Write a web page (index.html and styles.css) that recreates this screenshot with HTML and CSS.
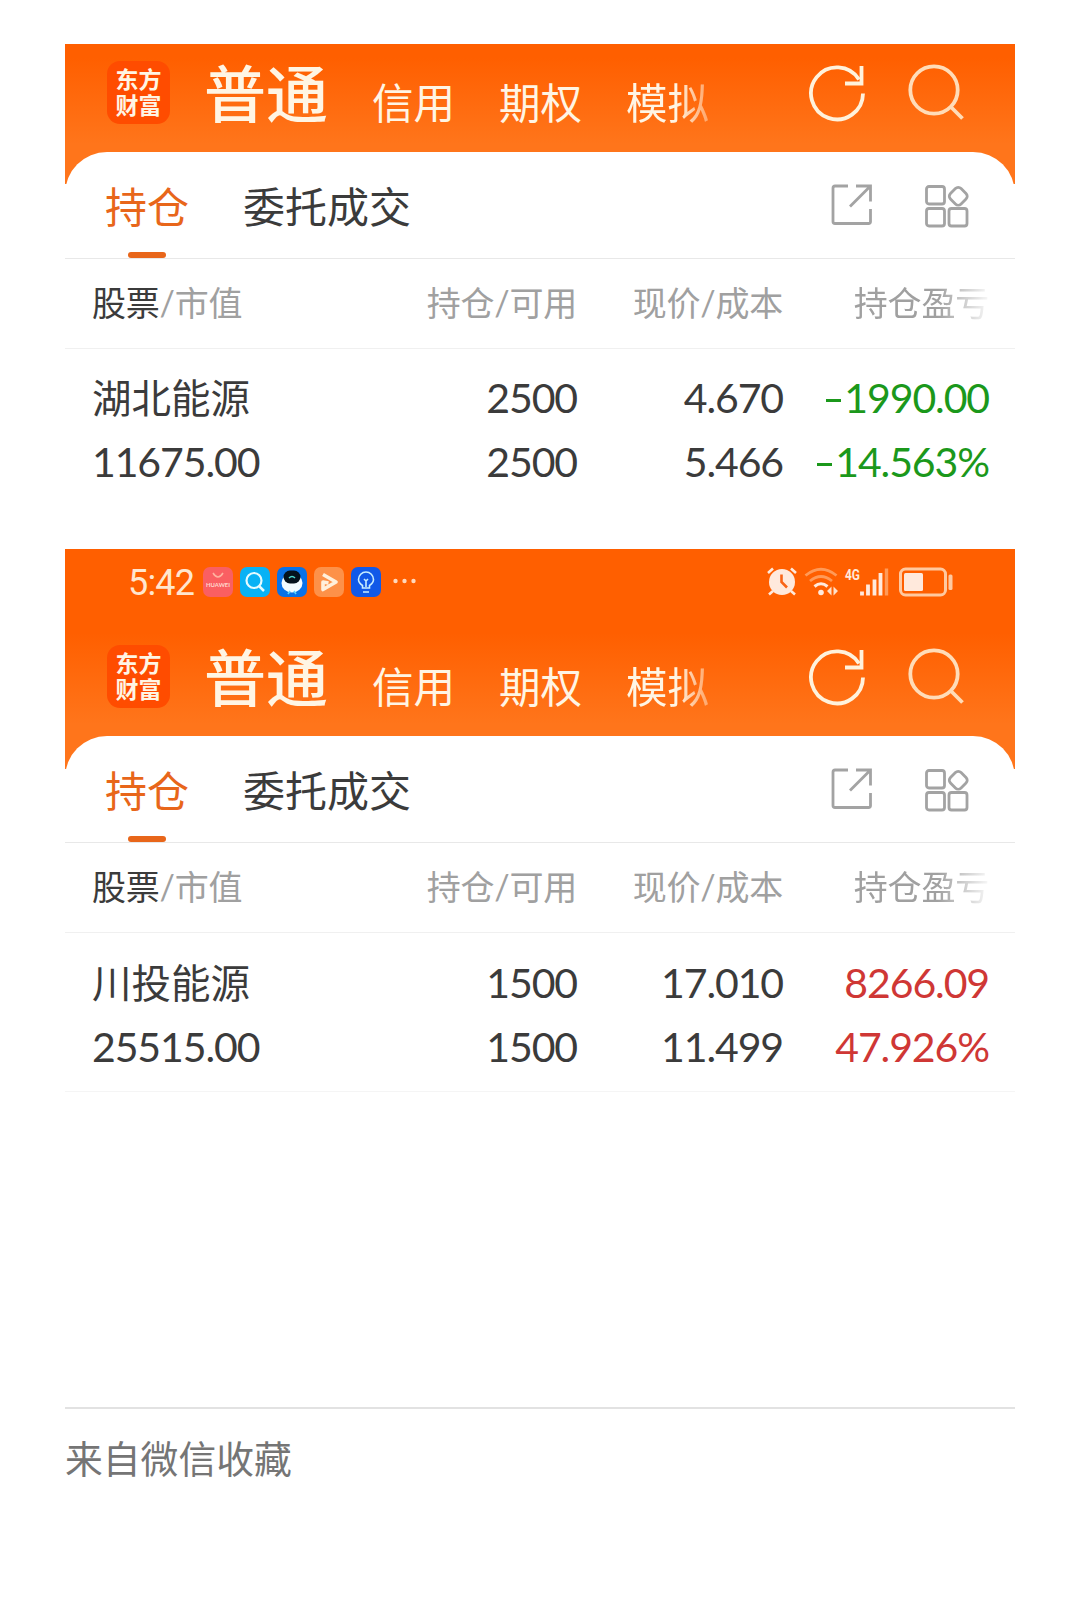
FILE: index.html
```html
<!DOCTYPE html>
<html lang="zh-CN">
<head>
  <meta charset="UTF-8">
  <title>持仓</title>
  <link rel="stylesheet" href="styles.css">
</head>
<body>
  <!-- Shared icons -->
  <svg class="sprite" width="0" height="0">
    <symbol id="refresh" viewBox="0 0 58 58">
      <path d="M55 29.5A26 26 0 1 1 51 15.500" />
      <path d="M53.500 2v17.500H37" />
    </symbol>
    <symbol id="search" viewBox="0 0 58 58">
      <circle cx="26" cy="26" r="23.700" />
      <path d="M43 43l11.500 11.500" />
    </symbol>
    <symbol id="export" viewBox="0 0 42 42">
      <path d="M17 2H4Q2 2 2 4V37.500Q2 39.500 4 39.500H37.500Q39.500 39.500 39.500 37.500V25M25 2H39.500V17.500M39 2.500L19 22.500" />
    </symbol>
    <symbol id="grid" viewBox="0 0 44 43">
      <rect x="1.500" y="1.500" width="18" height="17.500" rx="2.500" />
      <rect x="1.500" y="23.500" width="18" height="17.500" rx="2.500" />
      <rect x="24" y="23.500" width="18" height="17.500" rx="2.500" />
      <rect x="25.750" y="3.750" width="15" height="15" rx="4" transform="rotate(45 33.250 11.250)" />
    </symbol>
  </svg>

  <div class="note">
    <section class="panel">
      <header class="topbar">
        <div class="logo">东方<br>财富</div>
        <nav class="accounts">
          <span class="account active">普通</span>
          <span class="account">信用</span>
          <span class="account">期权</span>
          <span class="account fade">模拟</span>
        </nav>
        <svg class="icon-refresh"><use href="#refresh" /></svg>
        <svg class="icon-search"><use href="#search" /></svg>
      </header>
      <div class="sheet">
        <div class="tabs">
          <span class="tab selected">持仓</span>
          <span class="tab">委托成交</span>
          <svg class="icon-export"><use href="#export" /></svg>
          <svg class="icon-grid"><use href="#grid" /></svg>
        </div>
        <div class="row head">
          <span><b>股票</b>/市值</span>
          <span>持仓/可用</span>
          <span>现价/成本</span>
          <span class="cut">持仓盈亏</span>
        </div>
        <div class="stock">
          <div class="row">
            <span class="name">湖北能源</span>
            <span>2500</span>
            <span>4.670</span>
            <span class="down"><i class="minus"></i>1990.00</span>
          </div>
          <div class="row">
            <span>11675.00</span>
            <span>2500</span>
            <span>5.466</span>
            <span class="down"><i class="minus"></i>14.563%</span>
          </div>
        </div>
      </div>
    </section>

    <section class="panel second">
      <div class="statusbar">
        <span class="time">5:42</span>
        <div class="apps">
          <svg class="app" viewBox="0 0 30 30">
            <rect width="30" height="30" rx="7" fill="#fa5f62" />
            <path d="M10 6q5 8 10 0" fill="none" stroke="#ffb3a0" stroke-width="1.500" />
            <text x="15" y="19.500" class="brand" textLength="24" lengthAdjust="spacingAndGlyphs">HUAWEI</text>
          </svg>
          <svg class="app" viewBox="0 0 30 30">
            <rect width="30" height="30" rx="7" fill="#08b2f5" />
            <circle cx="14" cy="13.500" r="7.500" fill="none" stroke="#e4fbff" stroke-width="2.200" />
            <path d="M19 19l5 5" stroke="#e4fbff" stroke-width="2.500" />
          </svg>
          <svg class="app" viewBox="0 0 30 30">
            <rect width="30" height="30" rx="7" fill="#0872e8" />
            <ellipse cx="15" cy="16" rx="10.500" ry="9.500" fill="#f2fbff" />
            <rect x="6.500" y="3.500" width="17" height="13" rx="6.500" fill="#04121d" />
            <path d="M12 11q3-3 6 0" fill="none" stroke="#4bd9cf" stroke-width="1.500" />
            <path d="M13 24l-2 3M17 24l2 3" stroke="#5dd4ff" stroke-width="1.600" />
          </svg>
          <svg class="app" viewBox="0 0 30 30">
            <rect width="30" height="30" rx="7" fill="#fd9149" />
            <path d="M9 7.500L22 15 9 22.500V15l5.500 1" fill="none" stroke="#fff0dc" stroke-width="3.600" stroke-linejoin="round" />
          </svg>
          <svg class="app" viewBox="0 0 30 30">
            <rect width="30" height="30" rx="7" fill="#1159e8" />
            <path d="M11.500 21v-2.500C8.500 16.500 7.500 14.500 7.500 12.500a7.500 7.500 0 0 1 15 0c0 2-1 4-4 6V21zM12 25h6M15 20v-6l-2-2M15 14l2-2" fill="none" stroke="#c6edff" stroke-width="1.600" />
          </svg>
        </div>
        <svg class="more" viewBox="0 0 24 6">
          <circle cx="2.500" cy="3" r="2.200" /><circle cx="11.500" cy="3" r="2.200" /><circle cx="20.500" cy="3" r="2.200" />
        </svg>
        <svg class="system" viewBox="0 0 186 30">
          <!-- alarm -->
          <circle cx="15" cy="15" r="13" fill="#ffe9dc" />
          <path d="M1 6l5-4.500M29 6l-5-4.500M6 24l-4 3.500M24 24l4 3.500" stroke="#ffe9dc" stroke-width="2.600" />
          <path d="M14.500 7.500V15l5.500 5.500" fill="none" stroke="#f96416" stroke-width="2.600" />
          <!-- wifi -->
          <path d="M38.500 8.500Q54-4 69.500 8.500" fill="none" stroke="#ff9a58" stroke-width="2.800" />
          <path d="M43 14q11-9 22 0" fill="none" stroke="#ff9a58" stroke-width="2.800" />
          <path d="M47.500 19.500q6.500-5.500 13 0" fill="none" stroke="#ffe9dc" stroke-width="3" />
          <circle cx="54" cy="25.500" r="2.800" fill="#ffe9dc" />
          <path d="M64.500 19.500v9l-4.500-4.500zM66.500 19.500v9l4.500-4.500z" fill="#ffe0c8" />
          <!-- mobile signal -->
          <text x="78" y="12.500" class="net" textLength="15" lengthAdjust="spacingAndGlyphs">4G</text>
          <path d="M95 28.500v-4M101 28.500V17.500M107.500 28.500V12.500M113.500 28.500V6" stroke="#ffe9dc" stroke-width="3.800" />
          <path d="M119.500 28.500V1.500" stroke="#ff9a58" stroke-width="3.400" />
          <!-- battery -->
          <rect x="133.500" y="2" width="45" height="26" rx="5" fill="none" stroke="#ffc9a0" stroke-width="3" />
          <rect x="137" y="6" width="19" height="18" rx="1.500" fill="#ffe9dc" />
          <rect x="181.500" y="7.500" width="4" height="15.500" rx="1.500" fill="#ffc9a0" />
        </svg>
      </div>
      <header class="topbar">
        <div class="logo">东方<br>财富</div>
        <nav class="accounts">
          <span class="account active">普通</span>
          <span class="account">信用</span>
          <span class="account">期权</span>
          <span class="account fade">模拟</span>
        </nav>
        <svg class="icon-refresh"><use href="#refresh" /></svg>
        <svg class="icon-search"><use href="#search" /></svg>
      </header>
      <div class="sheet">
        <div class="tabs">
          <span class="tab selected">持仓</span>
          <span class="tab">委托成交</span>
          <svg class="icon-export"><use href="#export" /></svg>
          <svg class="icon-grid"><use href="#grid" /></svg>
        </div>
        <div class="row head">
          <span><b>股票</b>/市值</span>
          <span>持仓/可用</span>
          <span>现价/成本</span>
          <span class="cut">持仓盈亏</span>
        </div>
        <div class="stock">
          <div class="row">
            <span class="name">川投能源</span>
            <span>1500</span>
            <span>17.010</span>
            <span class="up">8266.09</span>
          </div>
          <div class="row">
            <span>25515.00</span>
            <span>1500</span>
            <span>11.499</span>
            <span class="up">47.926%</span>
          </div>
        </div>
      </div>
    </section>

    <footer class="source">来自微信收藏</footer>
  </div>
</body>
</html>
```
FILE: styles.css
```css
* {
  box-sizing: border-box;
}
body {
  margin: 0;
  background-color: #fff;
  font-family: Lato, "Noto Sans CJK SC", sans-serif;
  color: #3b3b3b;
}
.sprite {
  display: block;
}
.note {
  width: 950px;
  height: 1602px;
  margin: 0 auto;
  padding-top: 44px;
}
.panel {
  height: 505px;
  background: linear-gradient(#ff5f00 0, #ff5f00 14px, #ff751b 100px, #ff751b 140px, #fff 140px);
}
.panel.second {
  height: 858px;
  background: linear-gradient(#ff5f00 0, #ff5f00 84px, #ff751b 175px, #ff751b 220px, #fff 220px);
}

/* Phone status bar */
.statusbar {
  display: flex;
  height: 79px;
  padding: 18px 62px 0 63px;
}
.time {
  width: 75px;
  font-family: Roboto, sans-serif;
  font-size: 36px;
  line-height: 32px;
  letter-spacing: -.800px;
  color: #ffe6cf;
}
.apps {
  display: flex;
  gap: 7px;
}
.app {
  width: 30px;
  height: 30px;
}
.brand {
  font-size: 6px;
  font-weight: bold;
  fill: #ffd8cf;
  text-anchor: middle;
}
.more {
  width: 24px;
  height: 6px;
  margin: 11px 0 0 12px;
  fill: #ffd9bd;
}
.system {
  width: 186px;
  height: 30px;
  margin-left: auto;
  overflow: visible;
}
.net {
  font-family: Roboto, sans-serif;
  font-size: 15px;
  font-weight: bold;
  fill: #ffe9dc;
}

/* Orange account bar */
.topbar {
  display: flex;
  height: 108px;
  padding: 17px 49px 0 42px;
  color: #fff5e4;
}
.logo {
  width: 63px;
  height: 63px;
  padding-top: 5px;
  border-radius: 13px;
  background-color: #ff4c00;
  font-size: 23px;
  font-weight: bold;
  line-height: 26px;
  text-align: center;
}
.accounts {
  display: flex;
  flex: 1;
  margin-left: 34px;
}
.account {
  margin: 17px 44px 0 0;
  font-size: 41.500px;
  line-height: 50px;
}
.account.active {
  margin-top: 0;
  font-size: 62px;
  font-weight: 500;
  line-height: 66px;
}
.fade {
  -webkit-mask-image: linear-gradient(90deg, #000 60%, rgba(0, 0, 0, .4) 100%);
  mask-image: linear-gradient(90deg, #000 60%, rgba(0, 0, 0, .4) 100%);
}
.icon-refresh,
.icon-search {
  width: 58px;
  height: 58px;
  fill: none;
  stroke: #fff2dc;
  stroke-width: 3.800;
}
.icon-refresh {
  margin: 3px 42px 0 0;
}
.icon-search {
  margin-top: 3px;
  stroke: #ffdcb8;
}

/* White card */
.sheet {
  border-radius: 42px 42px 0 0;
  background-color: #fff;
}
.tabs {
  display: flex;
  height: 107px;
  padding: 0 46px 0 40px;
  border-bottom: 1px solid #e8e8e8;
}
.tab {
  display: flex;
  flex-direction: column;
  margin-right: 54px;
  padding-top: 29px;
  font-size: 42px;
  line-height: 52px;
}
.selected {
  color: #e8661a;
}
.selected::after {
  content: "";
  width: 38px;
  height: 6px;
  margin: 19px auto 0;
  border-radius: 3px;
  background-color: #e8661a;
}
.icon-export,
.icon-grid {
  fill: none;
  stroke: #a3a3a3;
  stroke-width: 2.800;
}
.icon-export {
  width: 42px;
  height: 42px;
  margin: 32px 0 0 auto;
}
.icon-grid {
  width: 44px;
  height: 43px;
  margin: 33px 0 0 52px;
}

/* Holdings */
.row {
  display: grid;
  grid-template-columns: 279px 206px 206px 206px;
  padding-left: 27px;
  font-size: 41px;
  line-height: 64px;
  letter-spacing: -1.100px;
  text-align: right;
  white-space: nowrap;
}
.row span:first-child {
  text-align: left;
}
.head {
  height: 90px;
  border-bottom: 1px solid #f0f0f0;
  font-size: 34px;
  line-height: 88px;
  letter-spacing: -.200px;
  color: #a0a0a0;
}
.head b {
  font-weight: normal;
  color: #3b3b3b;
}
.head .cut {
  -webkit-mask-image: linear-gradient(90deg, #000 75%, transparent 102%);
  mask-image: linear-gradient(90deg, #000 75%, transparent 102%);
}
.stock {
  height: 159px;
  padding-top: 17px;
}
.second .stock {
  padding-top: 18px;
  border-bottom: 1px solid #f5f5f5;
}
.row .name {
  font-size: 39.500px;
  letter-spacing: 0;
}
.minus {
  display: inline-block;
  width: 15px;
  height: 3px;
  margin-right: 3px;
  vertical-align: 11px;
  background-color: currentColor;
}
.down {
  color: #1b981b;
}
.up {
  color: #cf3735;
}

.source {
  padding-top: 23px;
  border-top: 2px solid #e2e2e2;
  font-size: 37.800px;
  line-height: 54px;
  color: #757575;
}
```
